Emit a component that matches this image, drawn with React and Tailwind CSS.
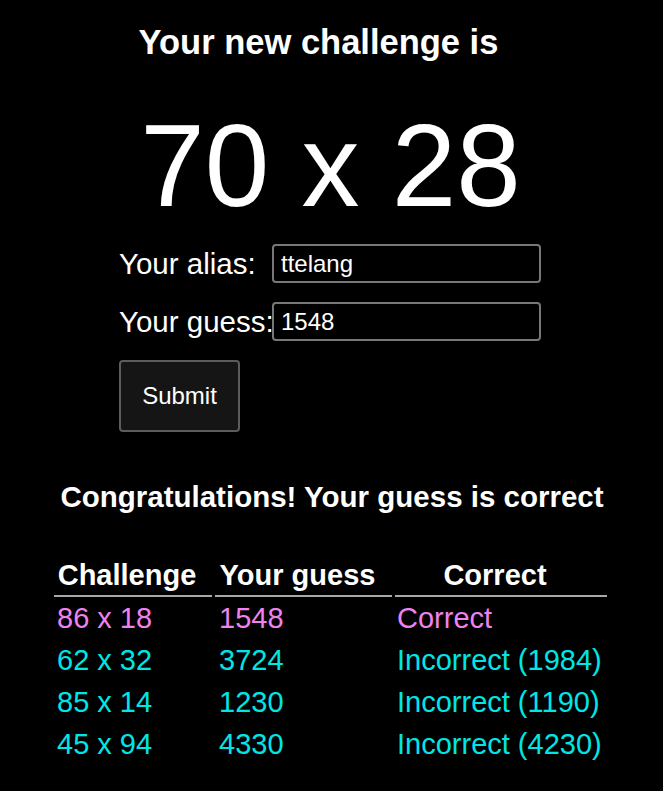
import React, { useState } from 'react';

const attempts = [
  { challenge: '86 x 18', guess: '1548', result: 'Correct', correct: true },
  { challenge: '62 x 32', guess: '3724', result: 'Incorrect (1984)', correct: false },
  { challenge: '85 x 14', guess: '1230', result: 'Incorrect (1190)', correct: false },
  { challenge: '45 x 94', guess: '4330', result: 'Incorrect (4230)', correct: false },
];

const App = () => {
  const [alias, setAlias] = useState('ttelang');
  const [guess, setGuess] = useState('1548');

  return (
    <div className="min-h-[791px] w-full bg-black text-white font-['Liberation_Sans',Arial,sans-serif]">
      <div className="pt-[23px] flex flex-col items-center">
        <h3 className="text-[34.5px] leading-[38px] font-bold pr-[26px]">Your new challenge is</h3>
        <h1 className="mt-[47px] text-[116px] leading-[116px] pr-[2px]">70 x 28</h1>
      </div>

      {/* attempt form */}
      <form className="mt-[20px] ml-[119px] flex flex-col gap-[19px]" onSubmit={(e) => e.preventDefault()}>
        <div className="flex items-center">
          <label className="w-[153px] text-[29.5px] leading-[32px] whitespace-nowrap">Your alias:</label>
          <input
            value={alias}
            onChange={(e) => setAlias(e.target.value)}
            className="w-[269px] h-[39px] bg-black border-2 border-[#777] rounded-[4px] px-[7px] text-[24px] text-white outline-none"
          />
        </div>
        <div className="flex items-center">
          <label className="w-[153px] text-[29.5px] leading-[32px] whitespace-nowrap">Your guess:</label>
          <input
            value={guess}
            onChange={(e) => setGuess(e.target.value)}
            className="w-[269px] h-[39px] bg-black border-2 border-[#777] rounded-[4px] px-[7px] text-[24px] text-white outline-none"
          />
        </div>
        <div>
          <button
            type="submit"
            className="w-[121px] h-[72px] bg-[#151515] border-2 border-[#5c5c5c] rounded-[4px] text-[24px] text-white"
          >
            Submit
          </button>
        </div>
      </form>

      <h4 className="mt-[48px] text-center text-[29.5px] leading-[33px] font-bold pl-[1px]">
        Congratulations! Your guess is correct
      </h4>

      <div className="mt-[45px] ml-[54px] grid grid-cols-[158px_177px_212px] gap-x-[3px]">
        {['Challenge', 'Your guess', 'Correct'].map((h) => (
          <div
            key={h}
            className="text-[29px] leading-[34px] font-bold text-center pr-[12px] pb-[3px] border-b-2 border-[#a8a8a8]"
          >
            {h}
          </div>
        ))}
        {attempts.map((a) => {
          const color = a.correct ? 'text-[#ee82ee]' : 'text-[#00e6e6]';
          return (
            <React.Fragment key={a.challenge}>
              <div className={`text-[29px] leading-[42px] pl-[3px] ${color}`}>{a.challenge}</div>
              <div className={`text-[29px] leading-[42px] pl-[4px] ${color}`}>{a.guess}</div>
              <div className={`text-[29px] leading-[42px] pl-[2px] whitespace-nowrap ${color}`}>{a.result}</div>
            </React.Fragment>
          );
        })}
      </div>
    </div>
  );
};

export default App;
